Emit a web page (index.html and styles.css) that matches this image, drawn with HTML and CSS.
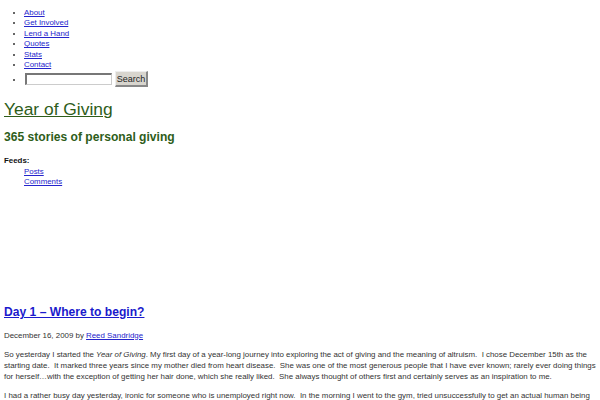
FILE: index.html
```html
<!DOCTYPE html>
<html>
<head>
<meta charset="utf-8">
<link rel="stylesheet" href="styles.css">
</head>
<body>
<ul class="nav">
  <li><a href="#">About</a></li>
  <li><a href="#">Get Involved</a></li>
  <li><a href="#">Lend a Hand</a></li>
  <li><a href="#">Quotes</a></li>
  <li><a href="#">Stats</a></li>
  <li><a href="#">Contact</a></li>
  <li class="search"><input type="text" class="search-input"><button class="search-btn">Search</button></li>
</ul>
<h1 class="site-title"><a href="#">Year of Giving</a></h1>
<h2 class="site-desc">365 stories of personal giving</h2>
<dl class="feeds">
  <dt>Feeds:</dt>
  <dd><a href="#">Posts</a></dd>
  <dd><a href="#">Comments</a></dd>
</dl>
<div class="post">
  <h2 class="post-title"><a href="#">Day 1 – Where to begin?</a></h2>
  <p class="meta">December 16, 2009 by <a href="#">Reed Sandridge</a></p>
  <p>So yesterday I started the <em>Year of Giving</em>. My first day of a year-long journey into exploring the act of giving and the meaning of altruism.&nbsp; I chose December 15th as the starting date.&nbsp; It marked three years since my mother died from heart disease.&nbsp; She was one of the most generous people that I have ever known; rarely ever doing things for herself…with the exception of getting her hair done, which she really liked.&nbsp; She always thought of others first and certainly serves as an inspiration to me.</p>
  <p>I had a rather busy day yesterday, ironic for someone who is unemployed right now.&nbsp; In the morning I went to the gym, tried unsuccessfully to get an actual human being on the phone at the unemployment office.</p>
</div>
</body>
</html>
```

FILE: styles.css
```css
body {
  margin: 0;
  padding: 0 4px;
  font-family: "Liberation Sans", Arial, sans-serif;
  font-size: 7.9px;
  line-height: 10.4px;
  color: #333;
  background: #fff;
}
a { color: #2424cc; }
.nav {
  margin: 8px 0 0;
  padding-left: 20px;
}
.nav li { list-style: disc; }
.search {
  margin-top: 1px;
}
.search-input {
  box-sizing: border-box;
  width: 87px;
  height: 12px;
  padding: 0 1px;
  border: 1px solid #ccc;
  border-top: 2px solid #777;
  border-left: 2px solid #777;
  font-size: 8px;
  vertical-align: middle;
  margin: 0 3px 0 1px;
}
.search-btn {
  box-sizing: border-box;
  font-family: "Liberation Sans", Arial, sans-serif;
  font-size: 9px;
  width: 33px;
  height: 16px;
  padding: 0;
  background: #d8d5ce;
  border: 1px solid #eee;
  border-right: 2px solid #888;
  border-bottom: 2px solid #888;
  color: #222;
  vertical-align: middle;
}
.site-title {
  margin: 11px 0 0;
  font-size: 17.4px;
  line-height: 22px;
  font-weight: normal;
}
.site-title a { color: #2e5d1a; }
.site-desc {
  margin: 9px 0 0;
  font-size: 12.1px;
  line-height: 16px;
  color: #2e5d1a;
}
.feeds { margin: 11px 0 0; }
.feeds dt { font-weight: bold; color: #111; }
.feeds dd { margin-left: 20px; }
.post { margin-top: 115px; }
.post-title {
  margin: 0;
  font-size: 12.1px;
  line-height: 18px;
}
.post-title a { color: #1a1acc; }
.meta { margin: 10px 0 0; }
.post p { margin: 9px 0 0; line-height: 11px; }
.post p.meta { line-height: 10.4px; margin-top: 10px; }
.post p + p:not(.meta) { margin-top: 8px; }
```
